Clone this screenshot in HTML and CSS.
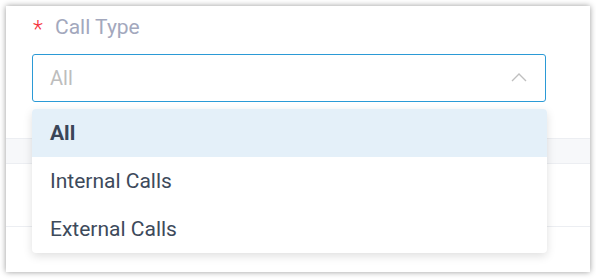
FILE: index.html
```html
<!DOCTYPE html>
<html>
<head>
<meta charset="utf-8">
<link rel="stylesheet" href="styles.css">
</head>
<body>
<div class="card">
  <div class="form">
    <div class="label"><span class="req">*</span><span class="label-text">Call Type</span></div>
    <div class="select-wrap">
      <div class="select">
        <span class="placeholder">All</span>
        <svg class="arrow" width="16" height="10" viewBox="0 0 16 10"><path d="M1 9 L8 2 L15 9" fill="none" stroke="#bfbfbf" stroke-width="1.4"/></svg>
      </div>
      <div class="dropdown">
        <div class="option active">All</div>
        <div class="option">Internal Calls</div>
        <div class="option">External Calls</div>
      </div>
    </div>
  </div>
  <div class="table">
    <div class="thead"></div>
    <div class="trow"></div>
  </div>
</div>
</body>
</html>
```
FILE: styles.css
```css
html, body {
  margin: 0;
  padding: 0;
  background: #ffffff;
}
body {
  font-family: Roboto, "Liberation Sans", sans-serif;
  width: 596px;
  height: 279px;
  overflow: hidden;
}
.card {
  margin: 6px 0 0 6px;
  width: 584px;
  height: 266px;
  background: #ffffff;
  box-shadow: 0 0 6px rgba(0, 0, 0, 0.4);
  padding-top: 6px;
  box-sizing: border-box;
}
.form {
  padding-left: 26px;
}
.label {
  height: 30px;
  display: flex;
  align-items: center;
  font-size: 21px;
  line-height: 30px;
}
.req {
  color: #f5313b;
  width: 22px;
  font-size: 23px;
  font-weight: 300;
  position: relative;
  top: 3px;
  padding-left: 1px;
}
.label-text {
  color: #a3a8bd;
}
.select-wrap {
  position: relative;
  margin-top: 12px;
  width: 514px;
}
.select {
  height: 48px;
  box-sizing: border-box;
  border: 1px solid #2b9ad6;
  border-radius: 3px;
  display: flex;
  align-items: center;
  justify-content: space-between;
  padding: 0 18px 0 17px;
}
.placeholder {
  color: #bdbdbd;
  font-size: 20px;
}
.arrow {
  display: block;
  margin-top: -2px;
}
.dropdown {
  position: absolute;
  top: 55px;
  left: 0;
  width: 515px;
  background: #ffffff;
  border-radius: 4px;
  box-shadow: 0 3px 10px rgba(0, 0, 0, 0.13);
  overflow: hidden;
  z-index: 2;
}
.option {
  height: 48px;
  line-height: 48px;
  padding-left: 18px;
  font-size: 21px;
  color: #3d4a5b;
}
.option.active {
  background: #e4f0f9;
  font-weight: bold;
  color: #3a4658;
}
.table {
  margin-top: 36px;
}
.thead {
  height: 24px;
  background: #f7f8fa;
  border-top: 1px solid #eceef2;
  border-bottom: 1px solid #eceef2;
}
.trow {
  height: 62px;
  border-bottom: 1px solid #eceef2;
}
```
